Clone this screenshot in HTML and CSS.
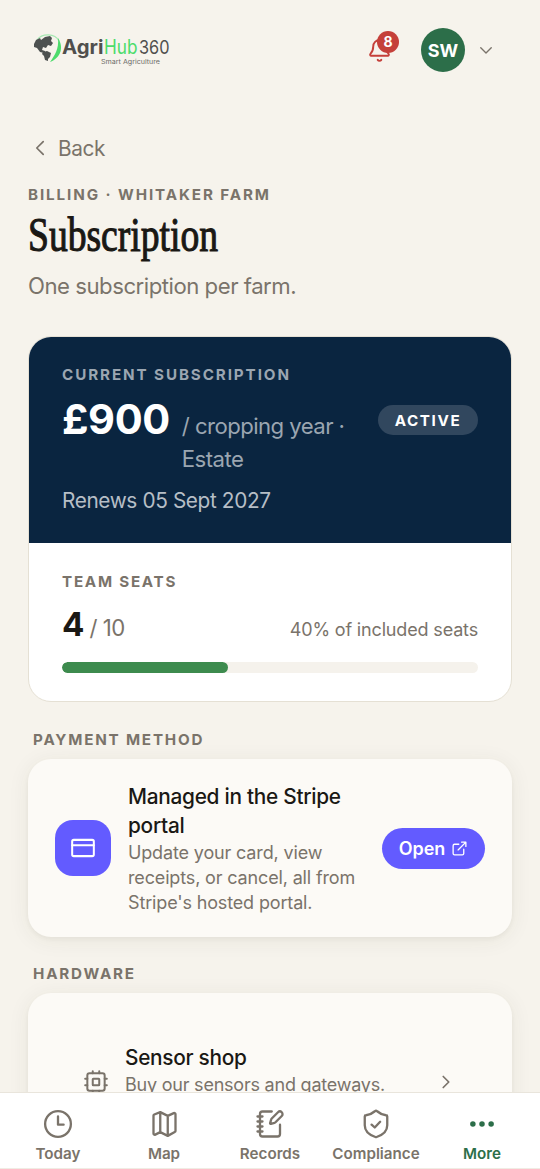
FILE: index.html
```html
<!DOCTYPE html>
<html lang="en">
<head>
<meta charset="utf-8">
<title>Subscription</title>
<link rel="stylesheet" href="styles.css">
</head>
<body>
<div class="app">
  <header class="topbar">
    <svg class="logo" width="140" height="36" viewBox="0 0 140 36" role="img" aria-label="AgriHub360 Smart Agriculture">
      <path class="rim" d="M3 6C8-1 21-1 25 7"/>
      <path class="land" d="M0 10 2 6l4-2 1 2 4-3 5-1 2 2-1 3 2 2-2 3-3-1-2 3-3-1-1 3 3 1-1 2-4-1-3-4-3-1zM9 18l4-1 4 2-1 4-2 2v2l-3-1-1-4-2-2z"/>
      <path class="leaf" d="M24 4c6 9 3 20-8 24 5-7 9-13 8-24z"/>
      <g class="wordmark">
        <text class="agri" x="28" y="19.500" textLength="41.500" lengthAdjust="spacingAndGlyphs">Agri</text>
        <text class="hub" x="70" y="19.500" textLength="33.500" lengthAdjust="spacingAndGlyphs">Hub</text>
        <text class="num" x="105" y="19.500" textLength="30.500" lengthAdjust="spacingAndGlyphs">360</text>
        <text class="tag" x="67" y="29.500" textLength="59" lengthAdjust="spacingAndGlyphs">Smart Agriculture</text>
      </g>
    </svg>
    <div class="account">
      <div class="bell">
        <svg class="icon" width="25" height="25" viewBox="0 0 24 24"><path d="M10.300 21a2 2 0 0 0 3.400 0M3.300 15.300A1 1 0 0 0 4 17h16a1 1 0 0 0 .7-1.700C19.400 14 18 12.500 18 8A6 6 0 0 0 6 8c0 4.500-1.400 6-2.700 7.300"/></svg>
        <span class="badge">8</span>
      </div>
      <span class="avatar">SW</span>
      <svg class="icon chev" width="18" height="18" viewBox="0 0 24 24"><path d="m5 9 7 7 7-7"/></svg>
    </div>
  </header>
  <main class="content">
    <a class="back"><svg class="icon" width="22" height="22" viewBox="0 0 24 24"><path d="m15.500 19-7-7 7-7"/></svg><span>Back</span></a>
    <p class="label eyebrow">BILLING · WHITAKER FARM</p>
    <h1 class="title">Subscription</h1>
    <p class="subtitle">One subscription per farm.</p>

    <section class="plan">
      <div class="plan-top">
        <p class="label plan-label">CURRENT SUBSCRIPTION</p>
        <div class="plan-row">
          <span class="price">£900</span>
          <span class="term">/ cropping year · Estate</span>
          <span class="status">ACTIVE</span>
        </div>
        <p class="renews">Renews 05 Sept 2027</p>
      </div>
      <div class="seats">
        <p class="label seats-label">TEAM SEATS</p>
        <div class="seat-row">
          <span><b class="used">4</b><span class="total">/ 10</span></span>
          <span class="share">40% of included seats</span>
        </div>
        <div class="track"><div class="fill" style="width:40%"></div></div>
      </div>
    </section>

    <p class="label section-label">PAYMENT METHOD</p>
    <section class="card payment">
      <span class="tile"><svg class="icon" width="26" height="26" viewBox="0 0 24 24"><rect x="2" y="4.500" width="20" height="15" rx="1.500"/><path d="M2 9.500h20"/></svg></span>
      <div class="info">
        <h2>Managed in the Stripe portal</h2>
        <p>Update your card, view receipts, or cancel, all from Stripe's hosted portal.</p>
      </div>
      <a class="open">Open <svg class="icon" width="17" height="17" viewBox="0 0 24 24"><path d="M15 3h6v6M10 14 21 3M18 13v6a2 2 0 0 1-2 2H5a2 2 0 0 1-2-2V8a2 2 0 0 1 2-2h6"/></svg></a>
    </section>

    <p class="label section-label hw">HARDWARE</p>
    <section class="card hardware">
      <svg class="icon chip" width="26" height="26" viewBox="0 0 24 24"><rect x="4" y="4" width="16" height="16" rx="2"/><rect x="9" y="9" width="6" height="6" rx=".5"/><path d="M9 2v2M15 2v2M9 20v2M15 20v2M2 9h2M2 15h2M20 9h2M20 15h2"/></svg>
      <div class="info">
        <h2>Sensor shop</h2>
        <p>Buy our sensors and gateways.</p>
      </div>
      <svg class="icon go" width="22" height="22" viewBox="0 0 24 24"><path d="m9 18 6-6-6-6"/></svg>
    </section>
  </main>
  <nav class="tabs">
    <a><svg class="icon" width="30" height="30" viewBox="0 0 24 24"><circle cx="12" cy="12" r="10.300"/><path d="M12 6v6.500h4.500"/></svg>Today</a>
    <a><svg class="icon" width="30" height="30" viewBox="0 0 24 24"><path d="M3.600 5.300a1 1 0 0 1 .6-.9L9 2.500l6 3 4.800-2.200a1 1 0 0 1 1.400.9v13.300a1 1 0 0 1-.6.9L15 21.500l-6-3-4 2a1 1 0 0 1-1.400-.9zM9 2.500v16M15 5.500v16"/></svg>Map</a>
    <a><svg class="icon" width="30" height="30" viewBox="0 0 24 24"><path d="M13.400 2H6a2 2 0 0 0-2 2v16a2 2 0 0 0 2 2h12a2 2 0 0 0 2-2v-7.400M2 6h4M2 10h4M2 14h4M2 18h4M21.400 5.600a1 1 0 1 0-3-3l-5 5a2 2 0 0 0-.5.9l-.8 2.800a.5.5 0 0 0 .6.6l2.900-.8a2 2 0 0 0 .8-.5z"/></svg>Records</a>
    <a><svg class="icon" width="30" height="30" viewBox="0 0 24 24"><path d="M21 13c0 5-3.800 7.800-8.500 9.400a1.500 1.500 0 0 1-1 0C6.800 20.800 3 18 3 13V6a1 1 0 0 1 1-1c2.500-.2 5-1.400 7.100-3.200a1.300 1.300 0 0 1 1.800 0C15 3.600 17.500 4.800 20 5a1 1 0 0 1 1 1zM8.500 12.500l2.500 2.300 4.300-4.600"/></svg>Compliance</a>
    <a class="active"><svg width="30" height="30" viewBox="0 0 24 24" fill="currentColor"><circle cx="4.700" cy="12" r="2.200"/><circle cx="12" cy="12" r="2.200"/><circle cx="19.300" cy="12" r="2.200"/></svg>More</a>
  </nav>
</div>
</body>
</html>
```

FILE: styles.css
```css
* { box-sizing: border-box; }
body, h1, h2, p { margin: 0; }
body { background: #f6f3ec; color: #1a1814; font-family: Inter, "Liberation Sans", sans-serif; }
.app { display: flex; flex-direction: column; height: 1169px; overflow: hidden; }
.icon { fill: none; stroke: currentColor; stroke-width: 1.85; stroke-linecap: round; stroke-linejoin: round; flex: none; display: block; }

.topbar { display: flex; align-items: center; justify-content: space-between; height: 100px; padding: 0 45px 0 34px; flex: none; }
.logo { display: block; margin-top: 4px; }
.land { fill: #4d5150; }
.rim { fill: none; stroke: #a7e8b3; stroke-width: 1.2; }
.leaf { fill: #4ddb6c; }
.wordmark { font-family: Inter, sans-serif; font-size: 20px; }
.agri { font-weight: 700; fill: #504f4d; }
.hub { font-weight: 400; fill: #4bdc6b; }
.num { font-size: 19px; font-weight: 400; fill: #504f4d; }
.tag { font-size: 6.5px; fill: #6c6b68; }
.account { display: flex; align-items: center; }
.bell { position: relative; color: #c5403a; margin-right: 29px; }
.badge { position: absolute; left: 10px; top: -7px; width: 22px; height: 22px; border-radius: 50%; background: #c5403a; color: #fff; font-size: 14px; font-weight: 700; line-height: 22px; text-align: center; }
.avatar { width: 44px; height: 44px; border-radius: 50%; background: #2c6e49; color: #fff; font-size: 18px; font-weight: 700; line-height: 45px; text-align: center; margin-right: 12px; }
.chev { color: #7a736a; }

.content { flex: 1; min-height: 0; overflow: hidden; padding: 34px 28px 0; }
.back { display: flex; align-items: center; gap: 7px; height: 28px; padding-left: 1px; color: #7a736a; font-size: 20.8px; letter-spacing: -.4px; }
.label { font-size: 15.2px; font-weight: 700; line-height: 20px; letter-spacing: 1.9px; color: #7a736a; white-space: nowrap; }
.eyebrow { margin-top: 23px; }
.title { font-family: "Liberation Serif", serif; font-weight: 400; font-size: 48px; line-height: 60px; white-space: nowrap; transform: scaleX(.783); transform-origin: 0 0; -webkit-text-stroke: 1.1px #1a1814; }
.subtitle { margin-top: 5px; font-size: 22.15px; line-height: 32px; letter-spacing: -.47px; color: #7a736a; }

.plan { margin-top: 34px; height: 366px; border: 1px solid #e5e0d4; border-radius: 23px; overflow: hidden; background: #fff; }
.plan-top { height: 206px; padding: 28px 33px 0; background: #0a2540; }
.plan-label { color: #9ba6b1; }
.plan-row { display: flex; align-items: baseline; margin-top: 8px; }
.price { font-size: 41.5px; line-height: 52px; font-weight: 700; letter-spacing: -.4px; color: #fff; }
.term { flex: 1; margin-left: 12px; font-size: 22.15px; line-height: 33px; letter-spacing: -.55px; color: #9ba6b1; }
.status { height: 30px; width: 100px; border-radius: 15px; background: #31475e; color: #fff; font-size: 15.2px; font-weight: 700; letter-spacing: 1.6px; line-height: 32px; text-align: center; align-self: flex-start; margin-top: 12px; }
.renews { margin-top: 10px; font-size: 20.8px; line-height: 30px; letter-spacing: -.38px; color: #b6bec6; }
.seats { padding: 29px 33px 0; }
.seats-label { letter-spacing: 1.75px; }
.seat-row { display: flex; align-items: baseline; justify-content: space-between; height: 61px; line-height: 46px; margin-top: 9px; color: #7a736a; }
.used { font-size: 33.2px; font-weight: 700; color: #1a1814; }
.total { font-size: 22.15px; margin-left: 5px; letter-spacing: -.5px; }
.share { font-size: 18px; letter-spacing: -.16px; }
.track { height: 11px; border-radius: 6px; background: #f5f2ec; overflow: hidden; }
.fill { height: 100%; border-radius: 6px; background: #3d8b4e; }

.section-label { margin: 28px 0 9px 5px; letter-spacing: 1.8px; }
.card { display: flex; align-items: center; border-radius: 23px; background: #fcfaf6; box-shadow: 0 2px 4px rgba(60, 50, 30, .05), 0 3px 22px rgba(60, 50, 30, .07); }
.payment { height: 178px; padding: 0 27px; }
.tile { width: 56px; height: 56px; border-radius: 18px; background: #635bff; color: #fff; display: flex; align-items: center; justify-content: center; flex: none; }
.info { flex: 1; margin-left: 17px; }
.info h2 { font-size: 20.8px; font-weight: 500; line-height: 29px; letter-spacing: -.27px; }
.info p { font-size: 18px; line-height: 25px; letter-spacing: -.15px; color: #7a736a; }
.open { display: flex; align-items: center; justify-content: center; gap: 6px; width: 103px; height: 41px; border-radius: 21px; background: #635bff; color: #fff; font-size: 18px; font-weight: 600; flex: none; }
.hw { margin-top: 27px; }
.hardware { height: 178px; padding: 0 55px; }
.chip { color: #7a736a; }
.hardware .info { margin-left: 16px; padding-bottom: 24px; white-space: nowrap; }
.hardware .info p { letter-spacing: -.22px; }
.go { color: #7a736a; }

.tabs { flex: none; display: grid; grid-template-columns: repeat(5, 1fr); height: 77px; padding: 16px 5px 0; background: #fff; border-top: 1px solid #e9e5dc; border-bottom: 1px solid #f0ece4; }
.tabs a { display: flex; flex-direction: column; align-items: center; gap: 5px; color: #7a736a; font-size: 15.2px; font-weight: 600; line-height: 20px; }
.tabs .active { color: #2c6e49; }
```
